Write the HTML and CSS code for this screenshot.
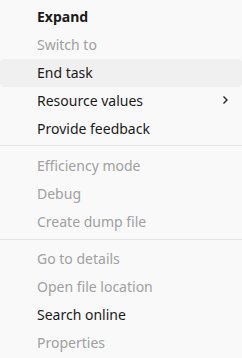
FILE: index.html
```html
<!DOCTYPE html>
<html lang="en">
<head>
    <meta charset="UTF-8">
    <meta name="viewport" content="width=device-width, initial-scale=1.0">
    <title>Context menu</title>
    <link rel="stylesheet" href="styles.css">
</head>
<body>
    <div id="menu">
        <div class="group">
            <div class="item bold">Expand</div>
            <div class="item disabled">Switch to</div>
            <div class="item hover">End task</div>
            <div class="item">
                <span>Resource values</span>
                <svg class="chevron" width="8" height="10" viewBox="0 0 8 10">
                    <path d="M2.5 1.5 L6 5 L2.5 8.5" fill="none" stroke="#1b1b1b" stroke-width="1.3"/>
                </svg>
            </div>
            <div class="item">Provide feedback</div>
        </div>
        <div class="separator"></div>
        <div class="group">
            <div class="item disabled">Efficiency mode</div>
            <div class="item disabled">Debug</div>
            <div class="item disabled">Create dump file</div>
        </div>
        <div class="separator second"></div>
        <div class="group">
            <div class="item disabled">Go to details</div>
            <div class="item disabled">Open file location</div>
            <div class="item">Search online</div>
            <div class="item disabled">Properties</div>
        </div>
    </div>
</body>
</html>
```

FILE: styles.css
```css
body {
    margin: 0;
    padding: 0;
    background-color: #f9f9f9;
    font-family: "Noto Sans", "Open Sans", sans-serif;
    font-size: 14px;
    color: #1b1b1b;
}

#menu {
    padding-top: 3px;
}

.item {
    box-sizing: border-box;
    height: 28px;
    display: flex;
    align-items: center;
    justify-content: space-between;
    padding: 0 13px 2px 37px;
    border-radius: 4px;
}

.bold {
    font-weight: bold;
}

.disabled {
    color: #a0a0a0;
}

.hover {
    background-color: #f0f0f0;
}

.chevron {
    display: block;
}

.separator {
    height: 1px;
    background-color: #e5e5e5;
    margin: 2px 0 6px;
}

.separator.second {
    margin: 3px 0 5px;
}
```
